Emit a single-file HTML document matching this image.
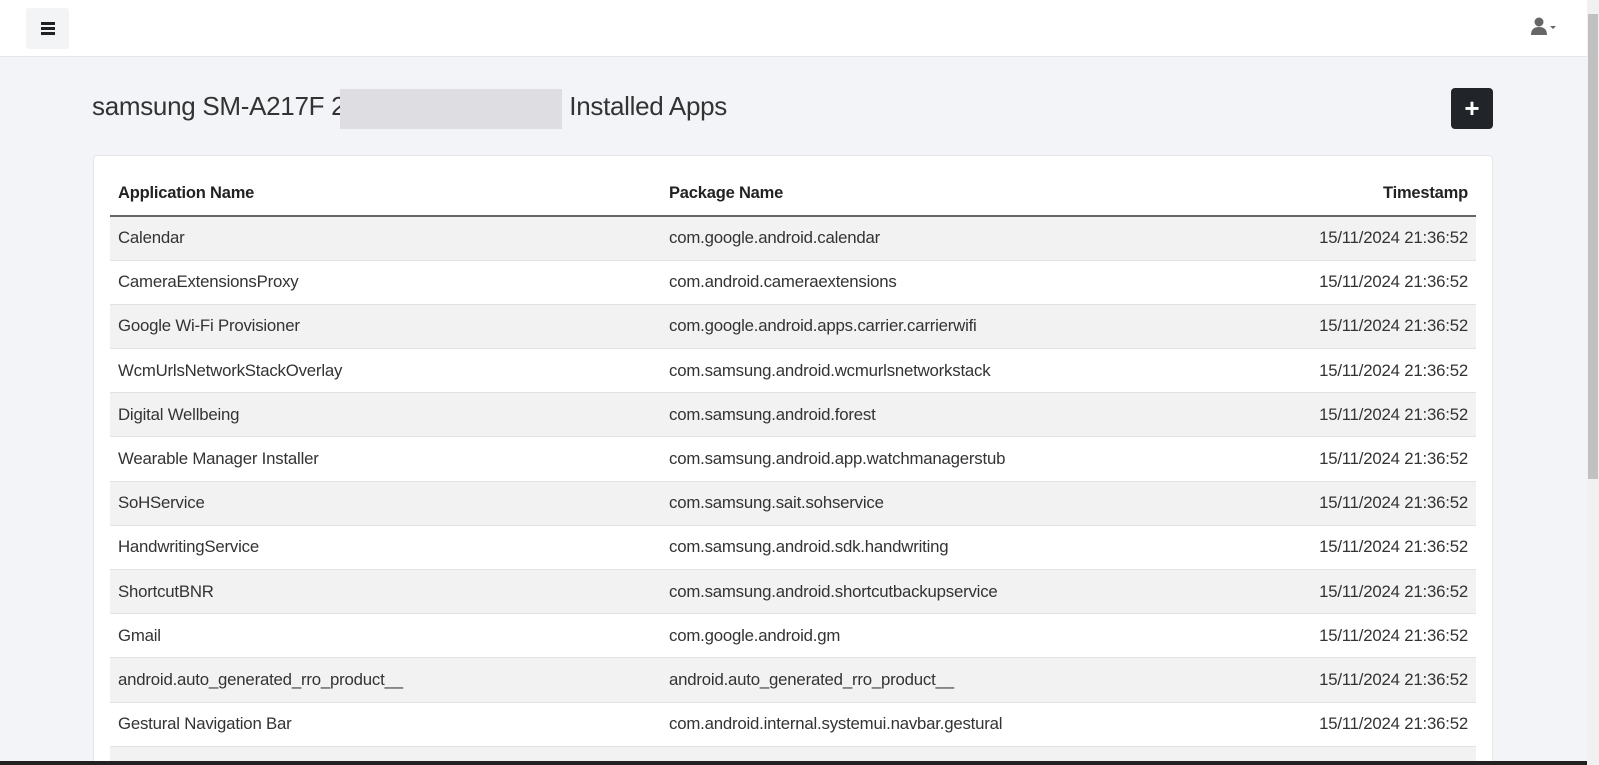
<!DOCTYPE html>
<html><head><style>
*{box-sizing:border-box;margin:0;padding:0}
html,body{width:1599px;height:765px;overflow:hidden}
body{background:#f3f4f8;font-family:"Liberation Sans",sans-serif;color:#333;position:relative}
.nav{position:absolute;left:0;top:0;width:1587px;height:57px;background:#fff;border-bottom:1px solid #e6e6ea}
.ham{position:absolute;left:26px;top:8px;width:43px;height:41px;background:#f3f4f6;border-radius:3px}
.ham i{position:absolute;left:15px;width:14px;height:3px;background:#222}
.sb{position:absolute;right:0;top:0;width:12px;height:765px;background:#f1f1f1}
.sb div{position:absolute;left:1px;top:14px;width:10px;height:465px;background:#c1c1c1}
h1{position:absolute;left:92px;top:91px;font-weight:normal;font-size:26px;color:#333;letter-spacing:-0.3px;white-space:nowrap}
.red{position:absolute;left:340px;top:89px;width:222px;height:40px;background:#dedee2}
.plus{position:absolute;left:1451px;top:88px;width:42px;height:41px;background:#212529;border-radius:4px;color:#fff;font-size:26px;font-weight:bold;text-align:center;line-height:40px}
.card{position:absolute;left:93px;top:155px;width:1400px;height:620px;background:#fff;border:1px solid #e6e6e8;border-radius:4px}
table{position:absolute;left:16px;top:16px;width:1366px;border-collapse:collapse;font-size:16.8px;letter-spacing:-0.2px}
th{text-align:left;font-weight:bold;color:#222;height:44px;padding:0 8px;border-bottom:2px solid #666;vertical-align:middle;font-size:16.5px}
td{height:44.2px;padding:0 8px;border-bottom:1px solid #e2e2e2;color:#333}
tr:nth-child(odd) td{background:#f2f2f2}
.r{text-align:right}
.bar{position:absolute;left:0;top:761px;width:1587px;height:4px;background:#222}
</style></head><body>
<div class="nav"><div class="ham"><i style="top:14px"></i><i style="top:19px"></i><i style="top:24px"></i></div>
<svg style="position:absolute;left:1531px;top:17px" width="30" height="20" viewBox="0 0 30 20"><circle cx="8" cy="5" r="4.5" fill="#666"/><path d="M0 18 Q0 10 8 10 Q16 10 16 18 Z" fill="#666"/><path d="M19 9 L25 9 L22 12Z" fill="#666"/></svg>
</div>
<div class="sb"><div></div></div>
<h1>samsung SM-A217F 2<span style="display:inline-block;width:224px"></span>Installed Apps</h1>
<div class="red"></div>
<div class="plus">+</div>
<div class="card"><table>
<thead><tr><th style="width:551px">Application Name</th><th>Package Name</th><th class="r">Timestamp</th></tr></thead>
<tbody>
<tr><td>Calendar</td><td>com.google.android.calendar</td><td class="r">15/11/2024 21:36:52</td></tr>
<tr><td>CameraExtensionsProxy</td><td>com.android.cameraextensions</td><td class="r">15/11/2024 21:36:52</td></tr>
<tr><td>Google Wi-Fi Provisioner</td><td>com.google.android.apps.carrier.carrierwifi</td><td class="r">15/11/2024 21:36:52</td></tr>
<tr><td>WcmUrlsNetworkStackOverlay</td><td>com.samsung.android.wcmurlsnetworkstack</td><td class="r">15/11/2024 21:36:52</td></tr>
<tr><td>Digital Wellbeing</td><td>com.samsung.android.forest</td><td class="r">15/11/2024 21:36:52</td></tr>
<tr><td>Wearable Manager Installer</td><td>com.samsung.android.app.watchmanagerstub</td><td class="r">15/11/2024 21:36:52</td></tr>
<tr><td>SoHService</td><td>com.samsung.sait.sohservice</td><td class="r">15/11/2024 21:36:52</td></tr>
<tr><td>HandwritingService</td><td>com.samsung.android.sdk.handwriting</td><td class="r">15/11/2024 21:36:52</td></tr>
<tr><td>ShortcutBNR</td><td>com.samsung.android.shortcutbackupservice</td><td class="r">15/11/2024 21:36:52</td></tr>
<tr><td>Gmail</td><td>com.google.android.gm</td><td class="r">15/11/2024 21:36:52</td></tr>
<tr><td>android.auto_generated_rro_product__</td><td>android.auto_generated_rro_product__</td><td class="r">15/11/2024 21:36:52</td></tr>
<tr><td>Gestural Navigation Bar</td><td>com.android.internal.systemui.navbar.gestural</td><td class="r">15/11/2024 21:36:52</td></tr>
<tr><td>Blocked Numbers Storage</td><td>com.android.providers.blockednumber</td><td class="r">15/11/2024 21:36:52</td></tr>
</tbody></table></div>
<div class="bar"></div>
</body></html>
